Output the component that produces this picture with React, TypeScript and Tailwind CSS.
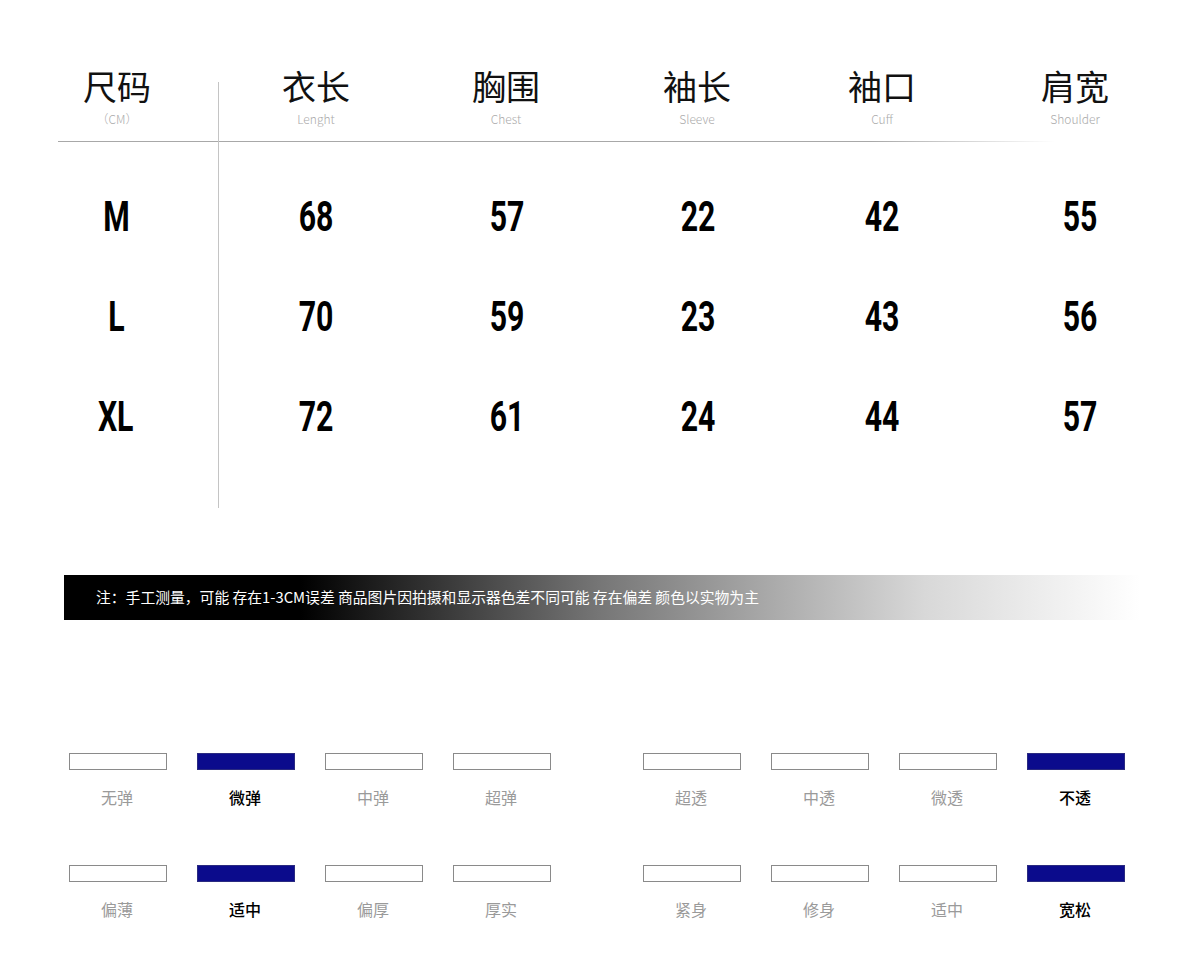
import React from "react";

const cjk = { fontFamily: '"Noto Sans CJK SC", "Noto Sans", sans-serif' };
const num = { fontFamily: 'Roboto, "Liberation Sans", sans-serif' };

type Col = { zh: string; en: string; w: string; vp: string; vals: string[] };

const cols: Col[] = [
  { zh: "衣长", en: "Lenght", w: "w-[194px]", vp: "pl-0", vals: ["68", "70", "72"] },
  { zh: "胸围", en: "Chest", w: "w-[186px]", vp: "pl-[2px]", vals: ["57", "59", "61"] },
  { zh: "袖长", en: "Sleeve", w: "w-[196px]", vp: "pl-[2px]", vals: ["22", "23", "24"] },
  { zh: "袖口", en: "Cuff", w: "w-[174px]", vp: "pl-0", vals: ["42", "43", "44"] },
  { zh: "肩宽", en: "Shoulder", w: "w-[212px]", vp: "pl-[10px]", vals: ["55", "56", "57"] },
];

function Header({ zh, en }: { zh: string; en: string }) {
  return (
    <div className="flex flex-col items-center h-[75px]">
      <div className="text-[34px] leading-[40px] text-[#111]" style={cjk}>
        {zh}
      </div>
      <div className="mt-[5px] text-[12px] leading-[16px] text-[#aaa] font-light" style={cjk}>
        {en}
      </div>
    </div>
  );
}

function Value({ v }: { v: string }) {
  return (
    <div className="h-[100px] flex items-center justify-center">
      <span
        className="inline-block text-[42px] font-bold text-black leading-none scale-x-[0.72]"
        style={num}
      >
        {v}
      </span>
    </div>
  );
}

function Swatch({ label, on }: { label: string; on?: boolean }) {
  return (
    <div className="w-[98px] flex flex-col items-center">
      <div
        className={
          on
            ? "w-[98px] h-[17px] bg-[#0b0b8c] border border-[#2a2a80]"
            : "w-[98px] h-[17px] bg-white border border-[#8a8a8a]"
        }
      />
      <div
        className={
          on
            ? "mt-[16px] mr-[2px] text-[16px] leading-[22px] text-black font-medium"
            : "mt-[16px] mr-[2px] text-[16px] leading-[22px] text-[#9a9a9a]"
        }
        style={cjk}
      >
        {label}
      </div>
    </div>
  );
}

function SwatchRow({ left, right, leftOn, rightOn }: { left: string[]; right: string[]; leftOn: number; rightOn: number }) {
  return (
    <div className="flex">
      <div className="ml-[69px] flex gap-[30px]">
        {left.map((l, i) => (
          <Swatch key={l + i} label={l} on={i === leftOn} />
        ))}
      </div>
      <div className="ml-[92px] flex gap-[30px]">
        {right.map((l, i) => (
          <Swatch key={l + i} label={l} on={i === rightOn} />
        ))}
      </div>
    </div>
  );
}

export default function App() {
  return (
    <div className="w-[1200px] h-[958px] bg-white overflow-hidden" style={cjk}>
      {/* table */}
      <div className="pt-[66px] flex h-[508px]">
        <div className="w-[218px] flex flex-col">
          <div className="pl-[16px]">
            <Header zh="尺码" en="（CM）" />
          </div>
          <div className="ml-[58px] h-px bg-[#a8a8a8]" />
          <div className="pl-[14px] mt-[25px]">
            {["M", "L", "XL"].map((s) => (
              <Value key={s} v={s} />
            ))}
          </div>
        </div>
        <div className="w-px mt-[16px] bg-[#c4c4c4]" />
        <div className="flex flex-col">
          <div className="flex">
            {cols.map((c) => (
              <div key={c.zh} className={c.w}>
                <Header zh={c.zh} en={c.en} />
              </div>
            ))}
          </div>
          <div className="w-[836px] h-px bg-[linear-gradient(to_right,#a8a8a8_0%,#a8a8a8_78%,#ffffff_100%)]" />
          <div className="flex mt-[25px]">
            {cols.map((c) => (
              <div key={c.zh} className={c.w + " " + c.vp}>
                {c.vals.map((v, i) => (
                  <Value key={i} v={v} />
                ))}
              </div>
            ))}
          </div>
        </div>
      </div>

      {/* note bar */}
      <div className="mt-[67px] ml-[64px] w-[1076px] h-[45px] flex items-center pl-[32px] bg-[linear-gradient(to_right,#000_0%,#000_22%,#777_50%,#d8d8d8_80%,#ffffff_100%)]">
        <span className="text-[14.8px] text-white font-normal whitespace-nowrap" style={cjk}>
          注：手工测量，可能 存在1-3CM误差 商品图片因拍摄和显示器色差不同可能 存在偏差 颜色以实物为主
        </span>
      </div>

      {/* swatches */}
      <div className="mt-[133px]">
        <SwatchRow left={["无弹", "微弹", "中弹", "超弹"]} right={["超透", "中透", "微透", "不透"]} leftOn={1} rightOn={3} />
        <div className="mt-[57px]">
          <SwatchRow left={["偏薄", "适中", "偏厚", "厚实"]} right={["紧身", "修身", "适中", "宽松"]} leftOn={1} rightOn={3} />
        </div>
      </div>
    </div>
  );
}
